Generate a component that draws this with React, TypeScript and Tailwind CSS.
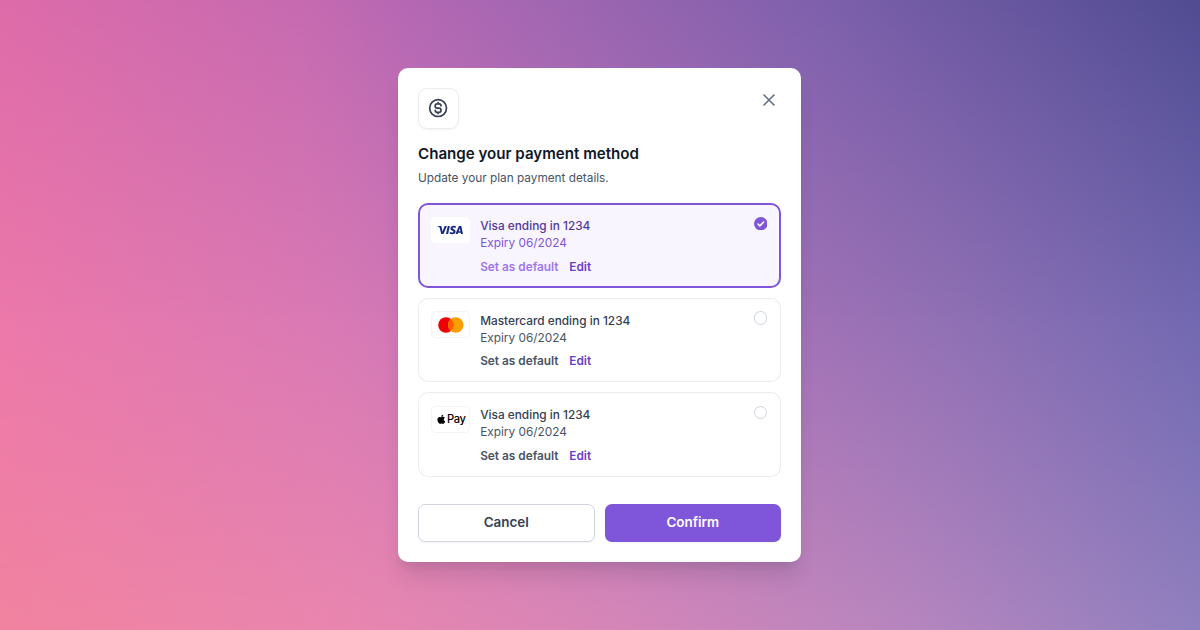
import { useState } from "react";
import type { ReactNode } from "react";
import clsx from "clsx";
import { FaApple } from "react-icons/fa";
import { SiVisa } from "react-icons/si";

function MastercardLogo() {
  return (
    <svg className="ml-px" width="26" height="16" viewBox="0 0 26 16">
      <circle cx="8" cy="8" r="7.8" fill="#ed0006" />
      <circle cx="17.7" cy="8" r="7.8" fill="#f9a000" />
      <path d="M12.85 1.9a7.8 7.8 0 0 1 0 12.2a7.8 7.8 0 0 1 0-12.2Z" fill="#ff5e00" />
    </svg>
  );
}

function ApplePayLogo() {
  return (
    <span className="flex items-center gap-px text-black">
      <FaApple size={10.5} className="-mt-px" />
      <span className="text-[11.2px] leading-none font-medium tracking-[-0.45px]">Pay</span>
    </span>
  );
}

function DollarIcon() {
  return (
    <svg
      className="size-[20.2px]"
      viewBox="0 0 24 24"
      fill="none"
      stroke="#344054"
      strokeWidth="2"
      strokeLinecap="round"
      strokeLinejoin="round"
    >
      <path d="M8.5 14.667A2.333 2.333 0 0 0 10.833 17H13a2.5 2.5 0 0 0 0-5h-2a2.5 2.5 0 0 1 0-5h2.167A2.333 2.333 0 0 1 15.5 9.333M12 5.5V7m0 10v1.5M22 12c0 5.523-4.477 10-10 10S2 17.523 2 12 6.477 2 12 2s10 4.477 10 10Z" />
    </svg>
  );
}

type Method = { id: number; name: string; expiry: string; logo: ReactNode };

const methods: Method[] = [
  { id: 1, name: "Visa ending in 1234", expiry: "Expiry 06/2024", logo: <SiVisa size={26} color="#172b85" /> },
  { id: 2, name: "Mastercard ending in 1234", expiry: "Expiry 06/2024", logo: <MastercardLogo /> },
  { id: 3, name: "Visa ending in 1234", expiry: "Expiry 06/2024", logo: <ApplePayLogo /> },
];

function PaymentCard({ method, selected, onSelect }: { method: Method; selected: boolean; onSelect: () => void }) {
  return (
    <div
      onClick={onSelect}
      className={clsx(
        "flex h-[84.6px] items-start rounded-[10px] pt-[13.6px] pr-[13.6px] pl-[13.4px] ring-inset",
        selected ? "bg-[#f9f5ff] ring-2 ring-[#7f56d9]" : "bg-white ring-1 ring-[#eaecf0]"
      )}
    >
      <div
        className={clsx(
          "flex h-[26.6px] w-[38.2px] shrink-0 items-center justify-center rounded-[5px] bg-white ring-1 ring-inset",
          selected ? "ring-white" : "ring-[#f2f4f7]"
        )}
      >
        {method.logo}
      </div>

      <div className="mt-[1.3px] ml-[10.6px] flex-1 text-[11.84px] leading-[17px]">
        <p className={clsx("font-medium", selected ? "text-[#53389e]" : "text-[#344054]")}>{method.name}</p>
        <p className={selected ? "text-[#7f56d9]" : "text-[#475467]"}>{method.expiry}</p>
        <div className="mt-[6.5px] flex gap-[10.8px] font-semibold">
          <button className={selected ? "text-[#9e77ed]" : "text-[#475467]"}>Set as default</button>
          <button className="text-[#6941c6]">Edit</button>
        </div>
      </div>

      {selected ? (
        <svg className="size-[13.5px]" viewBox="0 0 16 16">
          <circle cx="8" cy="8" r="8" fill="#7f56d9" />
          <path
            d="m4.7 8.3 2.2 2.2 4.5-4.6"
            fill="none"
            stroke="#fff"
            strokeWidth="1.8"
            strokeLinecap="round"
            strokeLinejoin="round"
          />
        </svg>
      ) : (
        <span className="size-[13.5px] rounded-full ring-1 ring-[#d0d5dd] ring-inset" />
      )}
    </div>
  );
}

export default function App() {
  const [selectedId, setSelectedId] = useState(1);

  return (
    <div className="relative isolate h-[630px] w-[1200px] overflow-hidden font-['Inter',sans-serif]">
      {/* Backdrop */}
      <div className="absolute inset-0 -z-10 bg-[linear-gradient(to_right,#f283a0_0%,#e986b0_30%,#d586b9_52%,#b886bf_75%,#9080bf_100%)]" />
      <div className="absolute inset-0 -z-10 bg-[linear-gradient(to_right,#ec78aa_0%,#d879b5_28%,#b473b8_52%,#9170b4_78%,#7168b1_100%)] mask-[linear-gradient(to_bottom,black_50%,transparent)]" />
      <div className="absolute inset-0 -z-10 bg-[linear-gradient(to_right,#dd6ba9_0%,#c66ab0_25%,#b467b3_34%,#a266b1_45%,#7e60ac_68%,#504c92_100%)] mask-[linear-gradient(to_bottom,black,transparent_50%)]" />

      {/* Modal */}
      <div className="mt-[68px] ml-[398px] flex h-[493.6px] w-[403px] flex-col rounded-[10px] bg-white px-5 pt-5 shadow-[0_17px_20px_-4px_rgba(16,24,40,0.12),0_7px_7px_-3px_rgba(16,24,40,0.05)]">
        <div className="flex items-start justify-between">
          <div className="flex size-[41px] items-center justify-center rounded-[9px] border border-[#eaecf0] shadow-[0_1px_2px_rgba(16,24,40,0.05)]">
            <DollarIcon />
          </div>
          <button className="mt-0.5 mr-0.5">
            <svg
              className="size-5"
              viewBox="0 0 24 24"
              fill="none"
              stroke="#667085"
              strokeWidth="2"
              strokeLinecap="round"
              strokeLinejoin="round"
            >
              <path d="M18 6 6 18M6 6l12 12" />
            </svg>
          </button>
        </div>

        <h2 className="mt-[13px] text-[15.12px] leading-[24px] font-semibold text-[#101828]">
          Change your payment method
        </h2>
        <p className="mt-1 text-[11.8px] leading-[17px] text-[#475467]">Update your plan payment details.</p>

        <div className="mt-[16.2px] flex flex-col gap-[10px]">
          {methods.map((m) => (
            <PaymentCard key={m.id} method={m} selected={m.id === selectedId} onSelect={() => setSelectedId(m.id)} />
          ))}
        </div>

        {/* Actions */}
        <div className="mt-[26.6px] grid grid-cols-2 gap-[10px] text-[13.44px] font-semibold">
          <button className="h-[38px] rounded-[7px] border border-[#d0d5dd] pb-px text-[#344054] shadow-[0_1px_2px_rgba(16,24,40,0.05)]">
            Cancel
          </button>
          <button className="h-[38px] rounded-[7px] bg-[#7f56d9] pb-px text-white shadow-[0_1px_2px_rgba(16,24,40,0.05)]">
            Confirm
          </button>
        </div>
      </div>
    </div>
  );
}
